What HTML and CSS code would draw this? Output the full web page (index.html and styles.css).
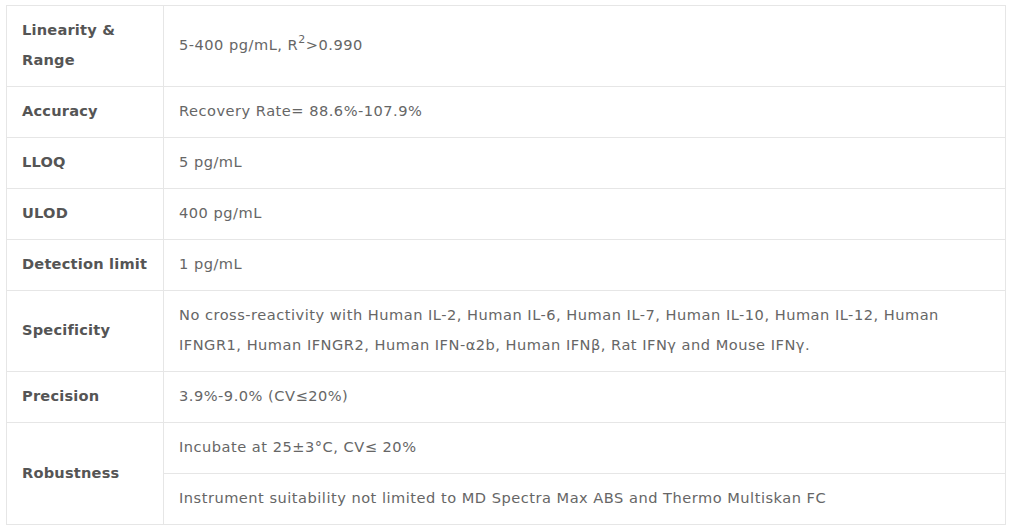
FILE: index.html
```html
<!DOCTYPE html>
<html>
<head>
<meta charset="utf-8">
<link rel="stylesheet" href="styles.css">
</head>
<body>
<div class="wrap">
<table class="spec">
  <tr><th>Linearity &amp; Range</th><td>5-400 pg/mL, R<sup>2</sup>&gt;0.990</td></tr>
  <tr><th>Accuracy</th><td>Recovery Rate= 88.6%-107.9%</td></tr>
  <tr><th>LLOQ</th><td>5 pg/mL</td></tr>
  <tr><th>ULOD</th><td>400 pg/mL</td></tr>
  <tr><th>Detection limit</th><td>1 pg/mL</td></tr>
  <tr><th>Specificity</th><td>No cross-reactivity with Human IL-2, Human IL-6, Human IL-7, Human IL-10, Human IL-12, Human IFNGR1, Human IFNGR2, Human IFN-α2b, Human IFNβ, Rat IFNγ and Mouse IFNγ.</td></tr>
  <tr><th>Precision</th><td>3.9%-9.0% (CV≤20%)</td></tr>
  <tr><th rowspan="2">Robustness</th><td>Incubate at 25±3°C, CV≤ 20%</td></tr>
  <tr><td>Instrument suitability not limited to MD Spectra Max ABS and Thermo Multiskan FC</td></tr>
</table>
</div>
</body>
</html>
```
FILE: styles.css
```css
html, body { margin: 0; padding: 0; background: #fff; }
.wrap { padding: 5px 0 0 6px; }
.spec {
  width: 1000px;
  border-collapse: collapse;
  font-family: "DejaVu Sans", sans-serif;
  font-size: 14.6px;
  letter-spacing: 0.5px;
  line-height: 30px;
  color: #666;
}
.spec th, .spec td {
  border: 1px solid #e6e6e6;
  padding: 9px 15px 11px;
  text-align: left;
  vertical-align: middle;
}
.spec th {
  width: 126px;
  font-weight: bold;
  letter-spacing: 0.2px;
  color: #555;
}
.spec sup { font-size: 11px; line-height: 0; vertical-align: 7px; }
```
